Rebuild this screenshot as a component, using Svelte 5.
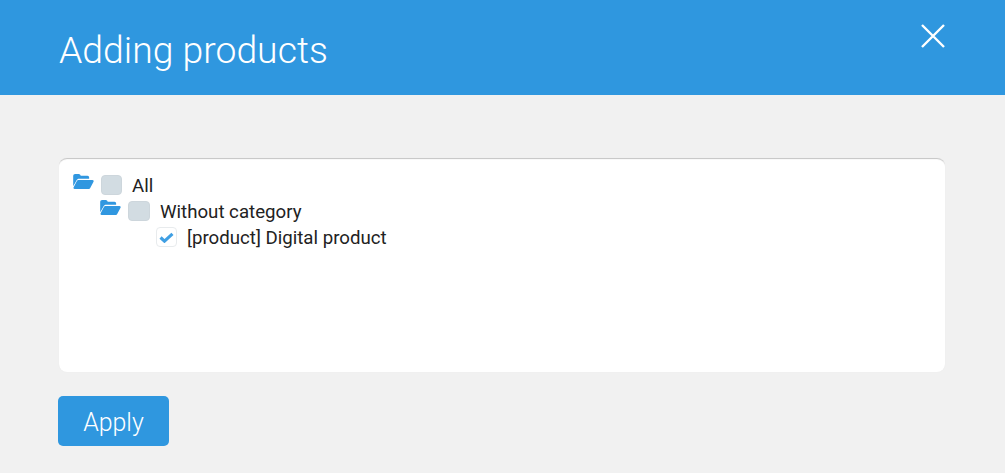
<script>
  const nodes = [
    { label: 'All', depth: 0, folder: true, checked: false },
    { label: 'Without category', depth: 1, folder: true, checked: false },
    { label: '[product] Digital product', depth: 2, folder: false, checked: true }
  ]
</script>

<div class="modal">
  <header class="head">
    <h1>Adding products</h1>
    <button class="close" aria-label="Close">
      <svg viewBox="0 0 24 24" width="24" height="24">
        <path d="M1 1L23 23M23 1L1 23" stroke="currentColor" stroke-width="2.400" fill="none" />
      </svg>
    </button>
  </header>

  <div class="body">
    <ul class="tree">
      {#each nodes as node}
        <li class="node" class:d1={node.depth === 1} class:d2={node.depth === 2}>
          {#if node.folder}
            <svg class="folder" viewBox="0 0 22 16" width="21" height="15">
              <path d="M0 13V2.200C0 1 .9 0 2 0h4c1 0 1.700.9 2 1.800h7.200c1.100 0 1.800.8 1.800 1.800V5H6.500C5 5 4.100 5.700 3.500 6.800z" fill="#3097e0" />
              <path d="M5.800 6.500H20.500C21.600 6.500 22.200 7.400 21.700 8.300L18.300 14.600C18 15.400 17.200 16 16.200 16H1.600C.5 16 0 15.100.5 14.200L3.800 7.800C4.200 7 5 6.500 5.800 6.500z" fill="#3097e0" />
            </svg>
          {/if}
          <span class="check" class:on={node.checked}>
            {#if node.checked}
              <svg viewBox="0 0 16 12" width="15" height="11">
                <path d="M1.500 6L5.800 10L14.500 2" stroke="#3f9fe3" stroke-width="3.400" fill="none" />
              </svg>
            {/if}
          </span>
          <span class="label">{node.label}</span>
        </li>
      {/each}
    </ul>
    <button class="apply">Apply</button>
  </div>
</div>

<style>
  :global(body) {
    background: #f1f1f1;
    font-family: Roboto, sans-serif;
  }

  .modal {
    height: 473px;
    overflow: hidden;
  }

  .head {
    height: 95px;
    background: #2f97df;
    color: #fff;
    display: flex;
    justify-content: space-between;
    padding: 0 60px 0 59px;
  }

  h1 {
    margin: 0;
    font-size: 37.330px;
    font-weight: 300;
    line-height: 100px;
  }

  .close {
    background: none;
    border: 0;
    color: #fff;
    padding: 0;
    width: 24px;
    height: 24px;
    margin-top: 24px;
  }

  .close svg {
    display: block;
  }

  .body {
    padding: 63px 60px 0 59px;
  }

  .tree {
    list-style: none;
    margin: 0;
    padding: 14px 14px;
    height: 214px;
    box-sizing: border-box;
    background: #fff;
    border-radius: 8px;
    box-shadow: inset 0 2px 1px -1px #c4c4c4, 0 0 1px #e4e4e4;
  }

  .node {
    display: flex;
    align-items: center;
    height: 26px;
    font-size: 18.670px;
    color: #222;
  }

  .d1 {
    padding-left: 27px;
  }

  .d1 .check {
    width: 22px;
  }

  .d2 {
    padding-left: 83px;
  }

  .folder {
    margin-right: 7px;
    margin-top: -8px;
    flex: none;
  }

  .check {
    width: 21px;
    height: 20px;
    box-sizing: border-box;
    border-radius: 4px;
    background: #d2dce2;
    border: 1px solid #cdd6dc;
    display: flex;
    align-items: center;
    justify-content: center;
    margin-right: 10px;
    flex: none;
  }

  .check.on {
    background: #fff;
    border-color: #e8ebed;
  }

  .label {
    position: relative;
    top: 1px;
  }

  .apply {
    display: block;
    margin-top: 24px;
    margin-left: -1px;
    width: 111px;
    height: 50px;
    padding-top: 3px;
    background: #2f97df;
    border: 0;
    border-radius: 5px;
    color: #fff;
    font-family: Roboto, sans-serif;
    font-size: 24.900px;
    font-weight: 300;
  }
</style>
